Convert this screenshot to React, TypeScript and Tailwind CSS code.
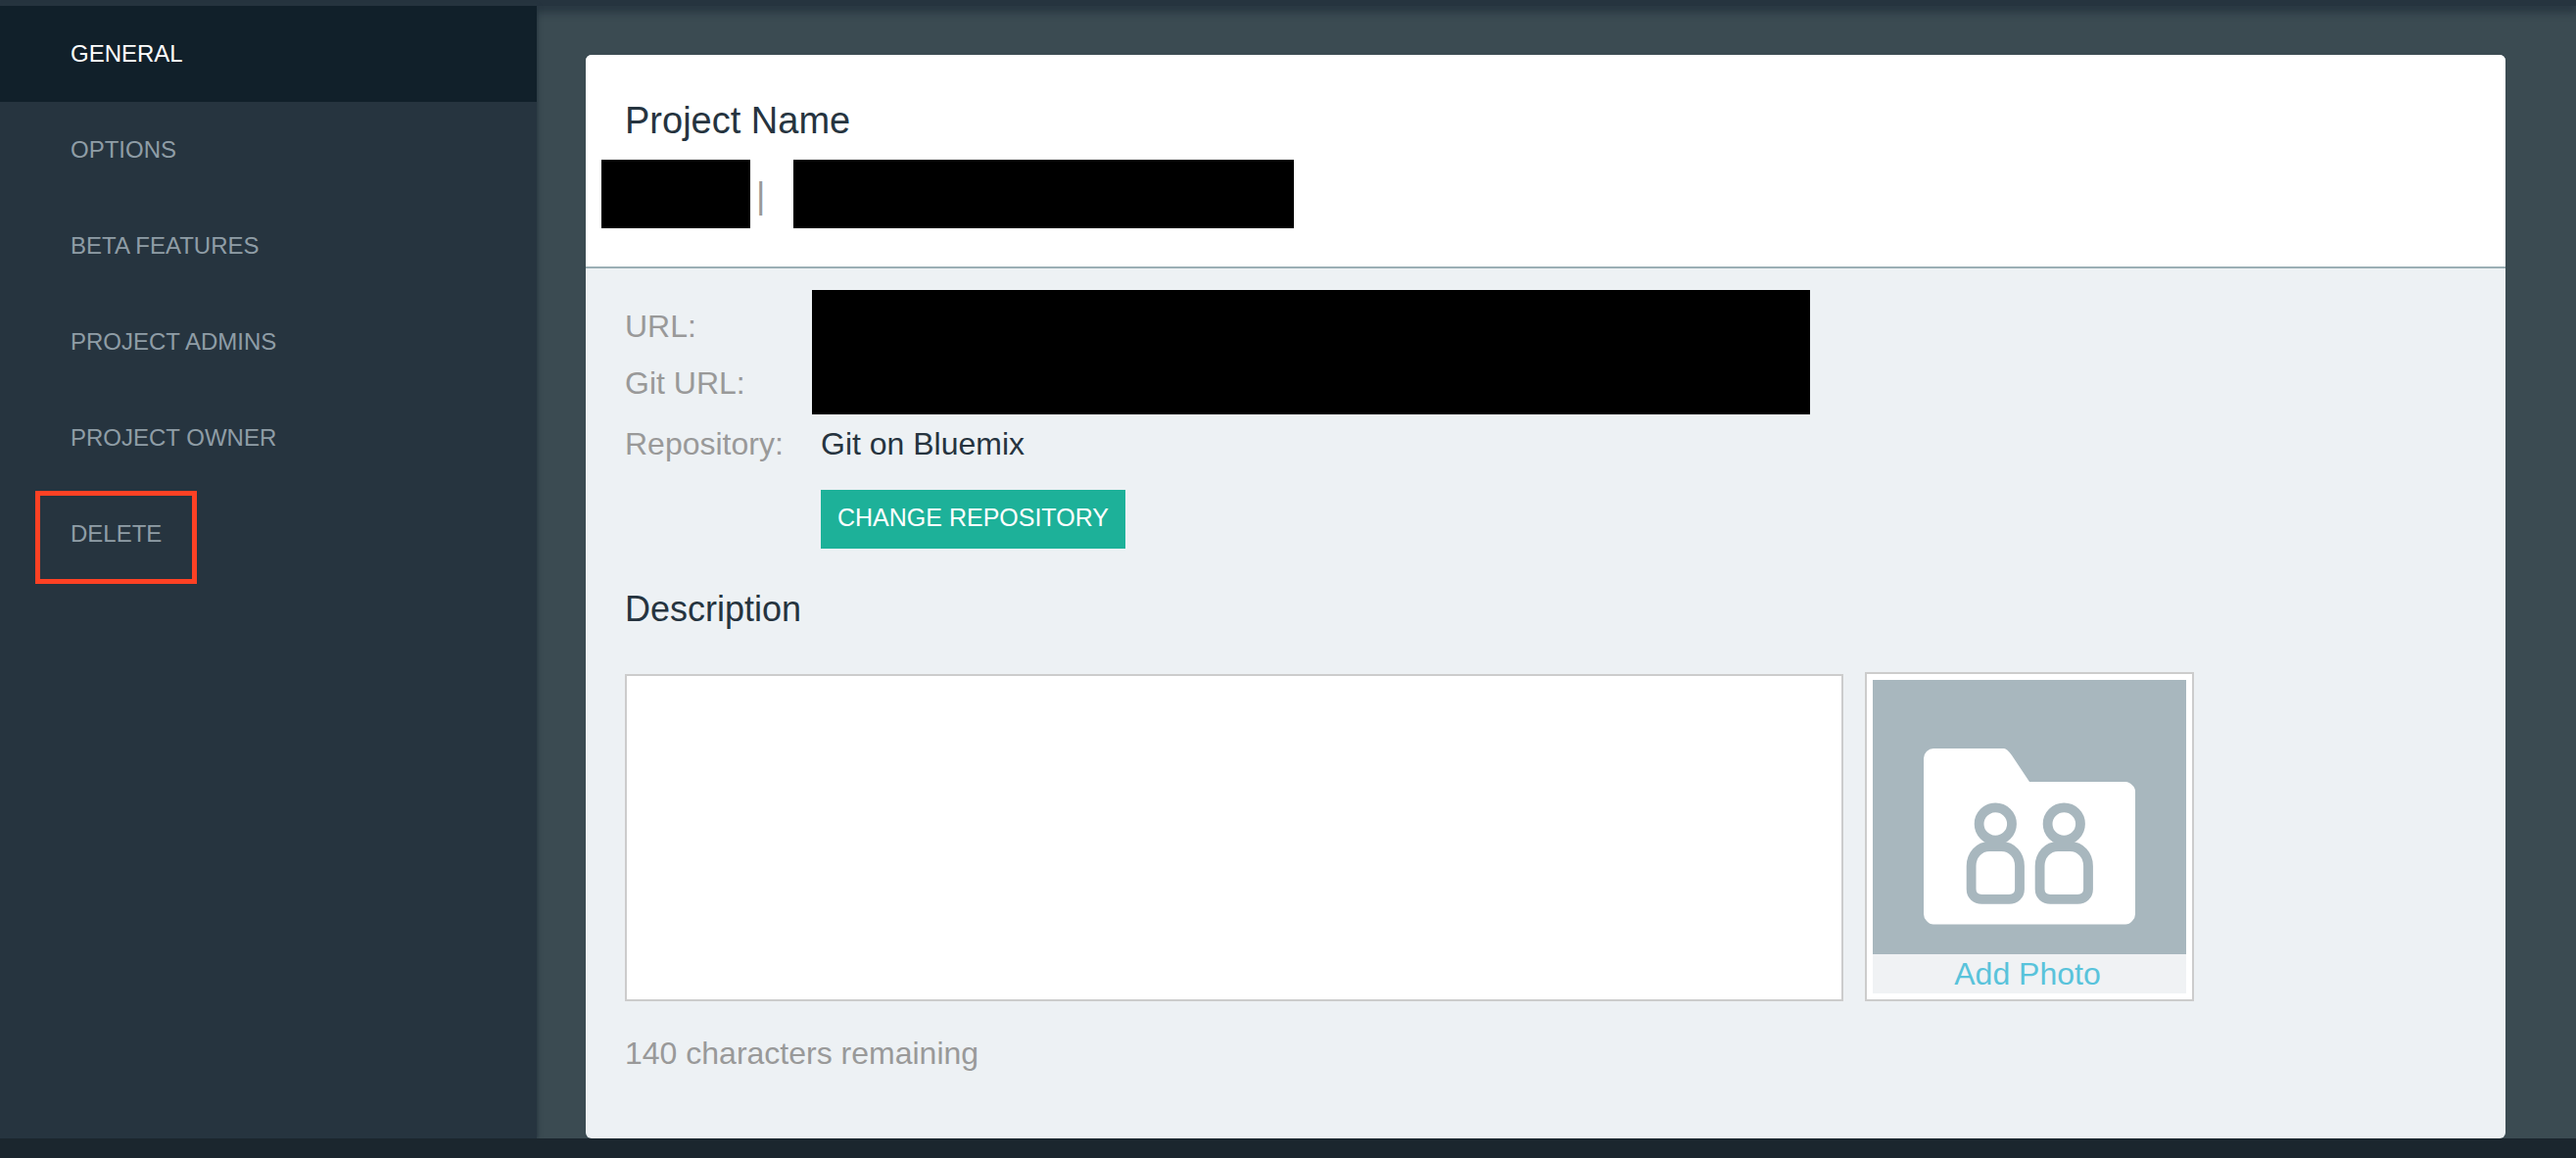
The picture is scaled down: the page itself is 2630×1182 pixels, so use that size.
const navItems = [
  "GENERAL",
  "OPTIONS",
  "BETA FEATURES",
  "PROJECT ADMINS",
  "PROJECT OWNER",
  "DELETE",
];

function NavItem({ label }: { label: string }) {
  const active = label === "GENERAL";
  return (
    <li className="relative">
      <a
        href={"#" + label.toLowerCase().replace(" ", "-")}
        aria-current={active ? "page" : undefined}
        className={
          active
            ? "flex h-[98px] items-center bg-[#11202a] pl-[72px] text-2xl text-white"
            : "flex h-[98px] items-center pl-[72px] text-2xl text-[#8f9da6]"
        }
      >
        {label}
      </a>
      {label === "DELETE" && (
        <span className="pointer-events-none absolute top-[5px] left-9 h-[95px] w-[165px] border-[5px] border-[#ff4124]" />
      )}
    </li>
  );
}

function Person({ x }: { x: number }) {
  return (
    <g transform={`translate(${x} 0)`} fill="none" stroke="#a8b7be" strokeWidth="9.8">
      <circle cx="0" cy="147" r="16.7" />
      <path d="M-6 170H6C17 170 24.7 179 24.7 190V213.500C24.700 220 20 223.800 14 223.800H-14C-20 223.800-24.700 220-24.700 213.500V190C-24.700 179-17 170-6 170Z" />
    </g>
  );
}

function FolderPicture() {
  return (
    <svg viewBox="0 0 320 280" className="block h-[280px] w-[320px] bg-[#a8b7be]" aria-hidden="true">
      <path
        fill="#fff"
        d="M62 70H134Q137 70 142 77L160 104H258Q262 104 265 107.500Q268 110 268 114V239Q268 243 265 246Q262 249.500 258 249.500H62Q58 249.500 55 246Q52 243 52 239V80Q52 76 55 73Q58 70 62 70Z"
      />
      <Person x={125.3} />
      <Person x={195.3} />
    </svg>
  );
}

export default function App() {
  return (
    <div className="flex min-h-screen flex-col bg-[#3b4b52] font-['Liberation_Sans',Arial,sans-serif] text-[#26343f]">
      <div className="h-1.5 bg-[#26343f] shadow-[0_4px_8px_2px_#26343f]" />
      <div className="flex">
        <nav aria-label="Project settings" className="relative w-[548px] shrink-0 bg-[#26343f] shadow-[1px_0_4px_#26343f]">
          <ul>
            {navItems.map((label) => (
              <NavItem key={label} label={label} />
            ))}
          </ul>
        </nav>
        <main className="min-w-0 flex-1 pt-[50px] pr-[72px] pl-[50px]">
          <div className="overflow-hidden rounded-md bg-[#edf1f4]">
            <header className="border-b-2 border-[#9bafb5] bg-white px-4 pt-11 pb-[39px]">
              <h1 className="pl-6 text-[38px] leading-[46px]">Project Name</h1>
              <div className="mt-[17px] flex h-[70px] items-center">
                <span className="h-full w-[152px] bg-black" />
                <span className="w-11 pt-1 pl-1.5 text-4xl text-[#999]">|</span>
                <span className="h-full w-[511px] bg-black" />
              </div>
            </header>
            <section className="px-10 pt-[22px] pb-[69px]">
              <dl className="grid grid-cols-[191px_1fr] grid-rows-[66px_61px_60px] text-[32px]">
                <dt className="self-end leading-[58px] text-[#999]">URL:</dt>
                <dd className="row-span-2 w-full max-w-[1019px] bg-black" />
                <dt className="leading-[58px] text-[#999]">Git URL:</dt>
                <dt className="leading-[60px] text-[#999]">Repository:</dt>
                <dd className="pl-[9px] leading-[60px]">Git on Bluemix</dd>
              </dl>
              <button
                type="button"
                className="mt-[17px] ml-[200px] block h-[60px] bg-[#1db199] px-[17px] pb-0.5 text-[25px] text-white"
              >
                CHANGE REPOSITORY
              </button>
              <h2 className="mt-[42px] text-4xl leading-10">
                <label htmlFor="description">Description</label>
              </h2>
              <div className="mt-11 flex items-end gap-[22px] pr-[278px]">
                <textarea
                  id="description"
                  maxLength={140}
                  className="h-[334px] min-w-0 flex-1 resize-none border-2 border-[#ccc] bg-white p-4 text-[32px]"
                />
                <div className="shrink-0 border-2 border-[#ccc] bg-white p-1.5">
                  <FolderPicture />
                  <button type="button" className="block h-10 w-full bg-[#f0f2f4] pr-1 text-[32px] leading-10 text-[#59c3db]">
                    Add Photo
                  </button>
                </div>
              </div>
              <p className="mt-[35px] text-[32px] leading-9 text-[#999]">140 characters remaining</p>
            </section>
          </div>
        </main>
      </div>
      <footer className="relative min-h-5 flex-1 bg-[#1b262e]" />
    </div>
  );
}
